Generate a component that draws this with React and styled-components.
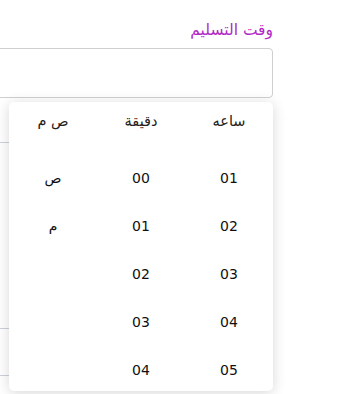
import React from "react";
import styled, { createGlobalStyle } from "styled-components";

const GlobalStyle = createGlobalStyle`
    html, body {
        margin: 0;
        padding: 0;
        overflow: hidden;
        background: #ffffff;
        font-family: "DejaVu Sans", "Noto Sans", sans-serif;
    }
`;

const Page = styled.div`
    width: 343px;
    height: 394px;
    direction: rtl;
    position: relative;
    overflow: hidden;
    background: #ffffff;
`;

const Field = styled.div`
    position: relative;
    margin-right: 70px;
    margin-left: -40px;
    padding-top: 20px;
`;

const Label = styled.div`
    color: #b12ac6;
    font-size: 15.5px;
    line-height: 20px;
    height: 20px;
    margin-bottom: 8px;
`;

const InputBox = styled.div`
    height: 48px;
    border: 1px solid #cfcfcf;
    border-radius: 4px;
    background: #fff;
`;

const BgList = styled.div`
    margin-right: 70px;
    margin-left: -40px;
`;

const BgRow = styled.div`
    height: ${(p) => p.h}px;
    border-bottom: ${(p) => (p.line ? "1px solid #cdd2da" : "none")};
`;

const Dropdown = styled.div`
    position: absolute;
    top: calc(100% + 4px);
    right: 0;
    width: 264px;
    height: 289px;
    background: #fff;
    border-radius: 5px;
    box-shadow: 0 2px 14px rgba(0, 0, 0, 0.16);
    overflow: hidden;
    display: grid;
    grid-template-columns: repeat(3, 1fr);
    z-index: 10;
`;

const Column = styled.div`
    display: flex;
    flex-direction: column;
    align-items: center;
`;

const Head = styled.div`
    height: 38px;
    line-height: 38px;
    font-size: 14.5px;
    color: #222;
    margin-bottom: 14px;
`;

const Cell = styled.div`
    height: 48px;
    line-height: 48px;
    flex-shrink: 0;
    font-size: 14px;
    color: #111;
    text-align: center;
`;

const hours = ["01", "02", "03", "04", "05"];
const minutes = ["00", "01", "02", "03", "04"];
const periods = ["ص", "م"];

const App = () => {
    return (
        <Page>
            <GlobalStyle />
            <Field>
                <Label>وقت التسليم</Label>
                <InputBox />
                <Dropdown>
                    <Column>
                        <Head>ساعه</Head>
                        {hours.map((h) => (
                            <Cell key={h}>{h}</Cell>
                        ))}
                    </Column>
                    <Column>
                        <Head>دقيقة</Head>
                        {minutes.map((m) => (
                            <Cell key={m}>{m}</Cell>
                        ))}
                    </Column>
                    <Column>
                        <Head>ص م</Head>
                        {periods.map((p) => (
                            <Cell key={p}>{p}</Cell>
                        ))}
                    </Column>
                </Dropdown>
            </Field>
            <BgList>
                <BgRow h={44} line />
                <BgRow h={139} />
                <BgRow h={46} line />
                <BgRow h={46} line />
                <BgRow h={47} line />
            </BgList>
        </Page>
    );
};

export default App;
